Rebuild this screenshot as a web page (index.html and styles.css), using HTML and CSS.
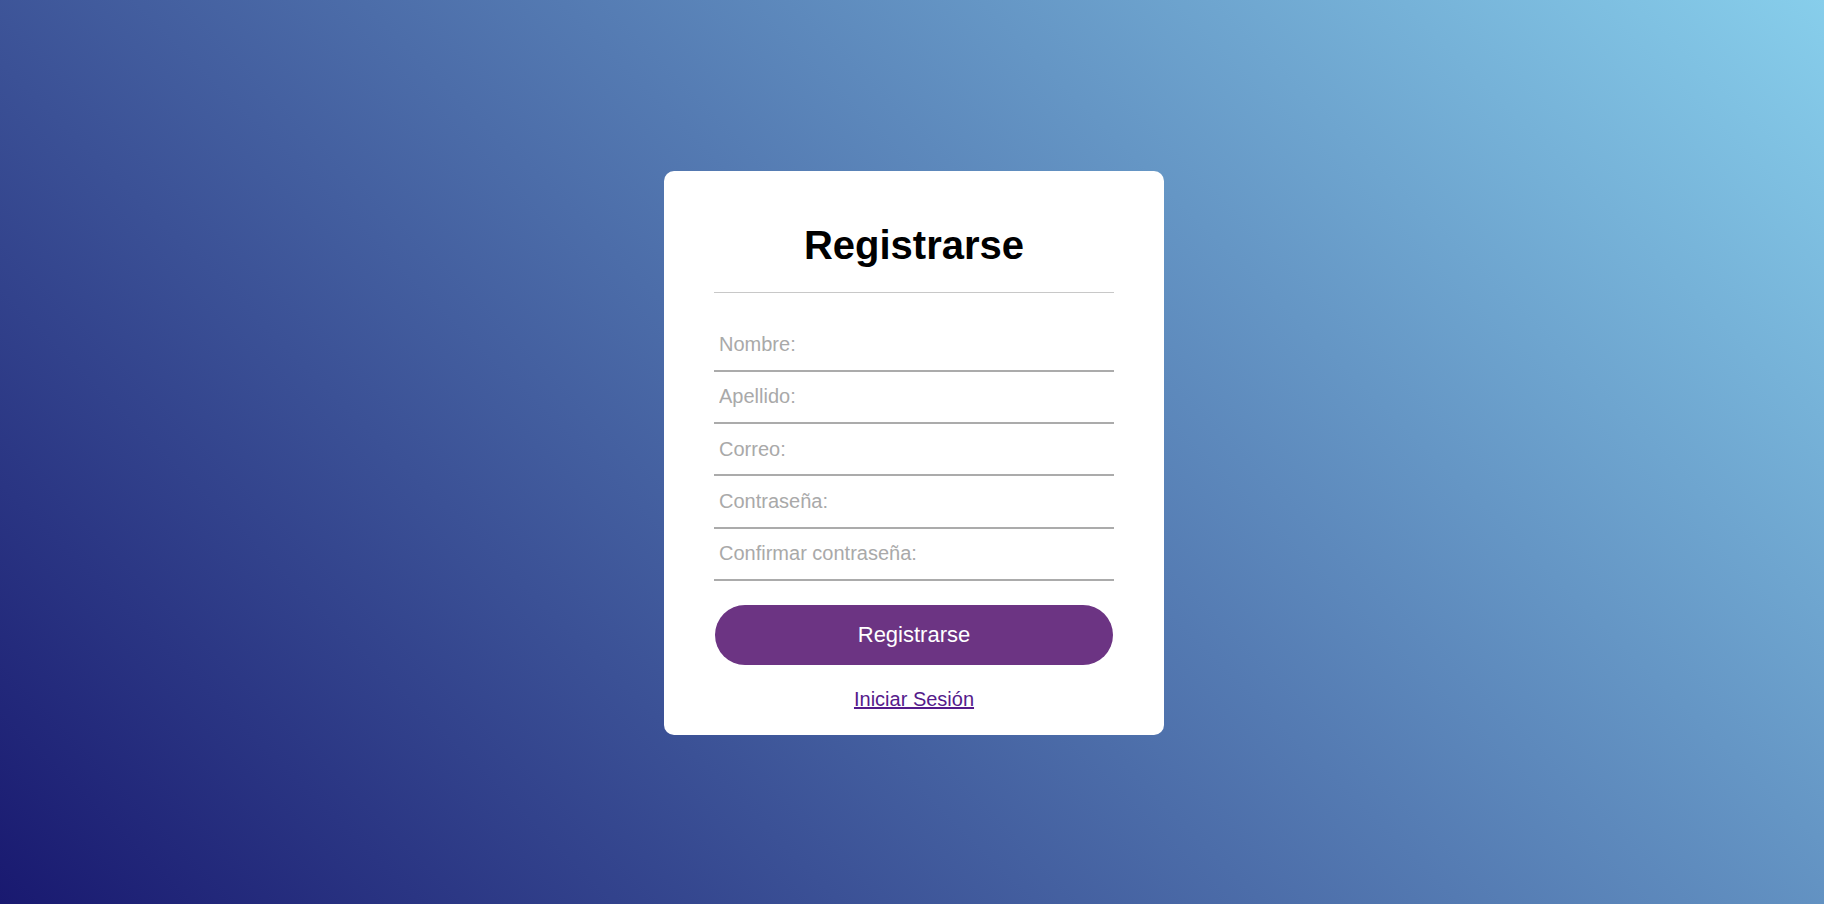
FILE: index.html
```html
<!DOCTYPE html>
<html lang="es">
<head>
<meta charset="utf-8">
<title>Registrarse</title>
<link rel="stylesheet" href="styles.css">
</head>
<body>
<main class="page">
  <section class="card">
    <h1 class="title">Registrarse</h1>
    <hr class="divider">
    <form class="form">
      <input class="field" type="text" placeholder="Nombre:">
      <input class="field" type="text" placeholder="Apellido:">
      <input class="field" type="email" placeholder="Correo:">
      <input class="field" type="password" placeholder="Contraseña:">
      <input class="field" type="password" placeholder="Confirmar contraseña:">
      <button class="submit" type="button">Registrarse</button>
    </form>
    <a class="login-link" href="#">Iniciar Sesión</a>
  </section>
</main>
</body>
</html>
```
FILE: styles.css
```css
* {
  box-sizing: border-box;
}

html, body {
  margin: 0;
  height: 100%;
}

body {
  font-family: "Liberation Sans", Arial, sans-serif;
  background: linear-gradient(45deg, #191970, #87ceeb);
}

.page {
  height: 100%;
  display: flex;
  align-items: center;
  justify-content: center;
  padding-left: 4px;
  padding-top: 2px;
}

.card {
  width: 500px;
  background: #fff;
  border-radius: 10px;
  padding: 50.7px 50px 23.3px;
  display: flex;
  flex-direction: column;
  align-items: stretch;
}

.title {
  margin: 0;
  font-size: 40px;
  font-weight: bold;
  line-height: 46px;
  text-align: center;
  color: #000;
}

.divider {
  margin: 24px 0 0;
  border: none;
  height: 1px;
  background: #c8c8c8;
}

.form {
  margin-top: 26.25px;
  display: flex;
  flex-direction: column;
}

.field {
  display: block;
  width: 100%;
  height: 52.35px;
  padding: 0 5px;
  margin: 0;
  border: none;
  border-bottom: 2px solid #ababab;
  font-family: "Liberation Sans", Arial, sans-serif;
  font-size: 20px;
  color: #333;
  background: transparent;
  outline: none;
}

.field::placeholder {
  color: #a9a9a9;
  opacity: 1;
}

.submit {
  margin: 24px 1px 0;
  height: 60.5px;
  padding: 0;
  border: none;
  border-radius: 31px;
  background: #6c3483;
  color: #fff;
  font-family: "Liberation Sans", Arial, sans-serif;
  font-size: 22px;
  line-height: normal;
  cursor: pointer;
}

.login-link {
  margin-top: 23px;
  align-self: center;
  font-size: 20px;
  line-height: 23px;
  color: #551a8b;
  text-decoration: underline;
}
```
